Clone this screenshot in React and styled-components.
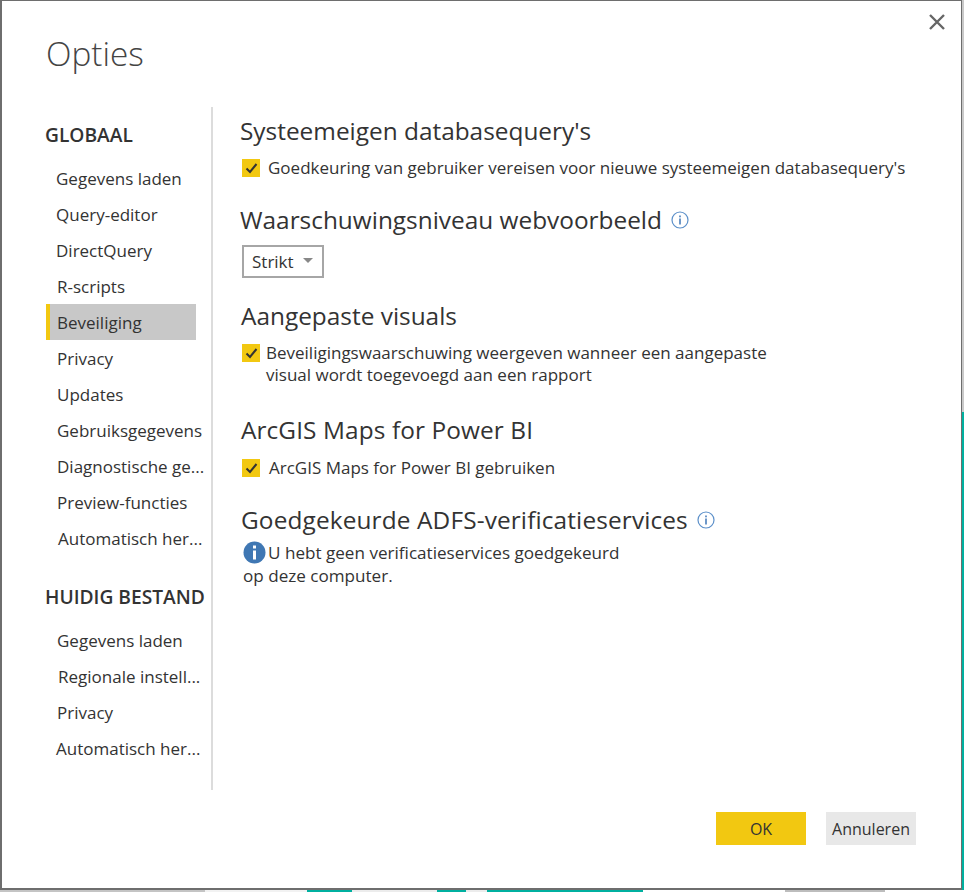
import React from 'react';
import styled, { createGlobalStyle } from 'styled-components';

const Global = createGlobalStyle`
  html, body { margin: 0; padding: 0; background: #fff; }
  body { width: 964px; height: 892px; overflow: hidden; font-family: "Open Sans", "Liberation Sans", sans-serif; color: #333; }
`;

const Page = styled.div`
  width: 964px; height: 892px; position: relative; overflow: hidden; background: #fff;
`;
const RightEdge = styled.div`
  position: absolute; top: 0; right: 0; width: 3px; height: 892px;
  background: linear-gradient(#c9c9c9 0, #c9c9c9 412px, #00b0a0 412px);
`;
const BottomStrip = styled.div`
  position: absolute; left: 0; bottom: 0; width: 964px; height: 2px;
  background: linear-gradient(90deg, #c4c4c4 0, #c4c4c4 205px, #f2f2f2 205px, #f2f2f2 307px, #00b0a0 307px, #00b0a0 352px, #ececec 352px, #ececec 437px, #00b0a0 437px, #00b0a0 466px, #ececec 466px, #ececec 487px, #00b0a0 487px, #00b0a0 643px, #fff 643px, #fff 785px, #bdbdbd 785px, #bdbdbd 885px, #fff 885px);
`;
const Dialog = styled.div`
  width: 962px; height: 890px; box-sizing: border-box; background: #fff;
  border: 2px solid #6e6e6e; border-top-width: 1px; border-right-width: 1px; padding: 32px 45px 0 44px; position: relative;
  display: flex; flex-direction: column;
`;
const Close = styled.button`
  position: absolute; top: 12px; right: 15px; width: 18px; height: 18px; padding: 0; border: 0; background: none;
`;
const Title = styled.h1`
  margin: 0 0 34px 0; font: 300 33.3px/40px "Open Sans", sans-serif; color: #444;
`;
const Body = styled.div`
  display: flex; height: 683px;
`;
const Side = styled.nav`
  width: 165px; border-right: 2px solid #dcdcdc; display: flex; flex-direction: column; padding-top: 14px; box-sizing: content-box;
`;
const Head = styled.div`
  font: 600 19.2px/26px "Open Sans", sans-serif; color: #333; white-space: nowrap; margin: ${p => p.$top}px 0 12px -1px;
`;
const Item = styled.div`
  width: 150px; height: 36px; box-sizing: border-box; font-size: 17px; line-height: 38px; color: #333;
  padding-left: ${p => p.$x || 10}px; white-space: nowrap;
  ${p => p.$active && 'background: #c8c8c8; border-left: 4px solid #f2c811; padding-left: 7px;'}
`;
const Main = styled.div`
  flex: 1; padding: 8px 0 0 27px; display: flex; flex-direction: column;
`;
const H2 = styled.h2`
  margin: ${p => p.$top || 0}px 0 ${p => p.$bottom || 0}px ${p => p.$x || 0}px; font: 400 24.4px/32px "Open Sans", sans-serif; color: #333; display: flex; align-items: center; gap: 9px; white-space: nowrap; letter-spacing: ${p => p.$track || 0}px;
`;
const Check = styled.div`
  display: flex; gap: ${p => p.$gap}px; margin-left: 2px; font-size: 17px; line-height: 22px; color: #333;
`;
const Box = styled.span`
  width: 18px; height: 18px; flex: none; background: #f2c811; box-sizing: border-box; display: flex; align-items: center; justify-content: center; margin-top: 2px;
`;
const Select = styled.div`
  width: 82px; height: 33px; box-sizing: border-box; border: 2px solid #a6a6a6; margin: 9px 0 0 2px; font-size: 17px; line-height: 30px; padding-left: 8px; display: flex; align-items: center; gap: 9px;
`;
const Caret = styled.span`
  width: 0; height: 0; border-left: 5px solid transparent; border-right: 5px solid transparent; border-top: 5px solid #888; margin-top: -3px;
`;
const Note = styled.div`
  font-size: 17.1px; line-height: 23px; margin: 5px 0 0 3px; color: #333;
`;
const NoteIcon = styled.svg`
  vertical-align: -5px; margin-right: 2px;
`;
const Footer = styled.div`
  display: flex; justify-content: flex-end; gap: 20px; margin-top: 22px;
`;
const Btn = styled.button`
  height: 33px; width: 90px; border: 0; background: ${p => p.$primary ? '#f2c811' : '#e8e8e8'}; font: 400 16px "Open Sans", sans-serif; color: #333; padding: 0;
`;

const Info = () => (
  <svg width="18" height="18" viewBox="0 0 18 18" fill="none">
    <circle cx="9" cy="9" r="8" stroke="#5b8fc9" strokeWidth="1.2" />
    <rect x="8.2" y="7.5" width="1.6" height="6" fill="#4a7ebb" />
    <rect x="8.2" y="4.5" width="1.6" height="1.8" fill="#4a7ebb" />
  </svg>
);
const Tick = () => (
  <svg width="13" height="12" viewBox="0 0 13 12" fill="none"><path d="M1.5 6.5 L5 10 L11.5 2" stroke="#333" strokeWidth="2" /></svg>
);

export default function App() {
  return (
    <Page>
      <Global />
      <RightEdge />
      <BottomStrip />
      <Dialog>
        <Close aria-label="Sluiten">
          <svg width="18" height="18" viewBox="0 0 18 18"><path d="M2 2 L16 16 M16 2 L2 16" stroke="#666" strokeWidth="2.4" /></svg>
        </Close>
        <Title>Opties</Title>
        <Body>
          <Side>
            <Head $top={1}>GLOBAAL</Head>
            <Item>Gegevens laden</Item>
            <Item>Query-editor</Item>
            <Item>DirectQuery</Item>
            <Item $x={11}>R-scripts</Item>
            <Item $active>Beveiliging</Item>
            <Item $x={11}>Privacy</Item>
            <Item $x={11}>Updates</Item>
            <Item $x={11}>Gebruiksgegevens</Item>
            <Item $x={11}>Diagnostische ge...</Item>
            <Item $x={11}>Preview-functies</Item>
            <Item $x={12}>Automatisch her...</Item>
            <Head $top={28}>HUIDIG BESTAND</Head>
            <Item $x={11}>Gegevens laden</Item>
            <Item $x={12}>Regionale instell...</Item>
            <Item $x={11}>Privacy</Item>
            <Item>Automatisch her...</Item>
          </Side>
          <Main>
            <H2 $bottom={10}>Systeemeigen databasequery's</H2>
            <Check $gap={8}><Box><Tick /></Box><span>Goedkeuring van gebruiker vereisen voor nieuwe systeemeigen databasequery's</span></Check>
            <H2 $top={25}>Waarschuwingsniveau webvoorbeeld <Info /></H2>
            <Select>Strikt <Caret /></Select>
            <H2 $top={22} $x={1} $bottom={10}>Aangepaste visuals</H2>
            <Check $gap={6}><Box><Tick /></Box><span>Beveiligingswaarschuwing weergeven wanneer een aangepaste<br />visual wordt toegevoegd aan een rapport</span></Check>
            <H2 $top={28} $x={1} $bottom={11} $track={0.1}>ArcGIS Maps for Power BI</H2>
            <Check $gap={9}><Box><Tick /></Box><span>ArcGIS Maps for Power BI gebruiken</span></Check>
            <H2 $top={25} $x={1} $track={0.13}>Goedgekeurde ADFS-verificatieservices <Info /></H2>
            <Note>
              <NoteIcon width="23" height="23" viewBox="0 0 23 23"><circle cx="11.5" cy="11.5" r="11" fill="#3f77b3" /><rect x="10" y="9.5" width="3" height="9" fill="#fff" /><rect x="10" y="4.5" width="3" height="3" fill="#fff" /></NoteIcon>
              U hebt geen verificatieservices goedgekeurd<br />op deze computer.
            </Note>
          </Main>
        </Body>
        <Footer>
          <Btn $primary>OK</Btn>
          <Btn>Annuleren</Btn>
        </Footer>
      </Dialog>
    </Page>
  );
}
